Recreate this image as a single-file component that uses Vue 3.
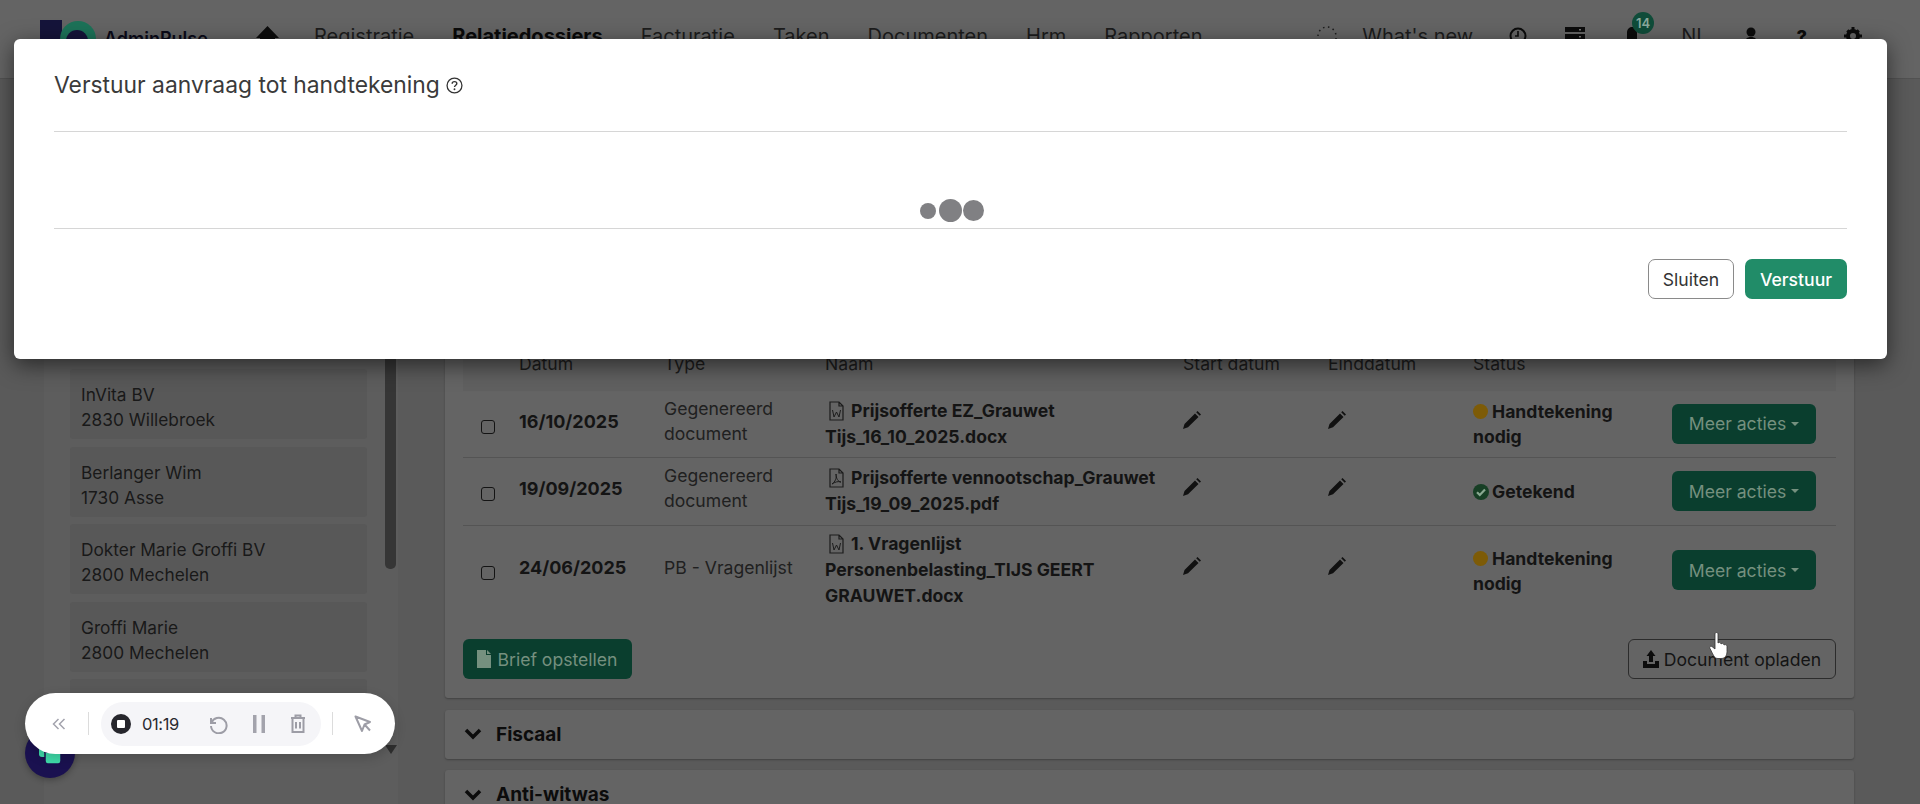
<script setup>
const nav = [
  { label: 'Registratie' },
  { label: 'Relatiedossiers', active: true },
  { label: 'Facturatie' },
  { label: 'Taken' },
  { label: 'Documenten' },
  { label: 'Hrm' },
  { label: 'Rapporten' },
]
const clients = [
  ['InVita BV', '2830 Willebroek'],
  ['Berlanger Wim', '1730 Asse'],
  ['Dokter Marie Groffi BV', '2800 Mechelen'],
  ['Groffi Marie', '2800 Mechelen'],
  ['', ''],
]
const docs = [
  { date: '16/10/2025', type: 'Gegenereerd document', kind: 'W', name: ['Prijsofferte EZ_Grauwet', 'Tijs_16_10_2025.docx'], status: 'pending', cls: 'r1' },
  { date: '19/09/2025', type: 'Gegenereerd document', kind: 'P', name: ['Prijsofferte vennootschap_Grauwet', 'Tijs_19_09_2025.pdf'], status: 'signed', cls: 'r2' },
  { date: '24/06/2025', type: 'PB - Vragenlijst', kind: 'W', name: ['1. Vragenlijst', 'Personenbelasting_TIJS GEERT', 'GRAUWET.docx'], status: 'pending', cls: 'r3' },
]
</script>

<template>
  <div class="page">
    <header class="topbar">
      <div class="logo">
        <svg class="logo-mark" width="56" height="50" viewBox="0 0 56 50">
          <rect x="0" y="0" width="22" height="50" fill="#15143a" />
          <circle cx="38" cy="19" r="18" fill="#1c7258" />
          <circle cx="37" cy="21" r="11" fill="#15143a" />
        </svg>
        <span class="logo-text">AdminPulse</span>
      </div>
      <svg class="home" width="23" height="20" viewBox="0 0 23 20"><path d="M11.5 0 23 12H19V20H4V12H0Z" fill="#0c0c0c" /></svg>
      <nav class="nav">
        <span v-for="n in nav" :key="n.label" :class="{ active: n.active }">{{ n.label }}</span>
      </nav>
      <div class="tools">
        <svg class="t-spin" width="20" height="24" viewBox="0 0 20 24"><path d="M1 12A9 9 0 0 1 19 12V20" fill="none" stroke="#1c1c1c" stroke-width="1.500" stroke-dasharray="1.500 3.500" /></svg>
        <span class="t-new">What's new</span>
        <svg class="t-clock" width="18" height="18" viewBox="0 0 18 18"><circle cx="9" cy="9" r="7.5" fill="none" stroke="#0c0c0c" stroke-width="2" /><path d="M9 4v5H6" fill="none" stroke="#0c0c0c" stroke-width="1.6" /></svg>
        <svg class="t-server" width="20" height="18" viewBox="0 0 20 18"><path d="M0 0h20v5H0zM0 7h20v5H0zM0 14h20v4H0z" fill="#0c0c0c" /><path d="M14 2h2v1.5h-2zM14 9h2v1.5h-2z" fill="#777" /></svg>
        <div class="t-bell">
          <svg width="12" height="18" viewBox="0 0 12 18"><path d="M6 0c3 0 5 2.500 5 6v6l1 2H0l1-2V6c0-3.500 2-6 5-6z" fill="#0c0c0c" /></svg>
          <span class="badge">14</span>
        </div>
        <span class="t-nl">NL</span>
        <svg class="t-user" width="12" height="18" viewBox="0 0 12 18"><circle cx="6" cy="5" r="4.500" fill="#0c0c0c" /><path d="M0 16c0-4 2-6 6-6s6 2 6 6z" fill="#0c0c0c" /></svg>
        <span class="t-help">?</span>
        <svg class="t-gear" width="18" height="18" viewBox="0 0 18 18"><circle cx="9" cy="9" r="5" fill="none" stroke="#0c0c0c" stroke-width="4" /><path d="M7.500 0h3v3h-3zM7.500 15h3v3h-3zM0 7.500h3v3H0zM15 7.500h3v3h-3zM2.300 4.400l2.100-2.100 2 2-2.100 2.100zM11.600 13.700l2.100-2.100 2 2-2.100 2.100zM13.700 2.300l2.100 2.100-2 2-2.100-2.100zM4.400 11.600l2.100 2.100-2 2-2.100-2.100z" fill="#0c0c0c" /></svg>
      </div>
    </header>

    <main class="main">
      <aside class="panel">
        <div class="list">
          <div v-for="(c, i) in clients" :key="i" class="client">
            <div>{{ c[0] }}</div>
            <div>{{ c[1] }}</div>
          </div>
        </div>
        <div class="scroll">
          <div class="thumb"></div>
          <div class="arrow"></div>
        </div>
      </aside>

      <section class="content">
        <div class="card docs">
          <table class="table">
            <colgroup>
              <col class="c0" /><col class="c1" /><col class="c2" /><col class="c3" />
              <col class="c4" /><col class="c5" /><col class="c6" /><col class="c7" />
            </colgroup>
            <thead>
              <tr>
                <th></th><th>Datum</th><th>Type</th><th>Naam</th>
                <th>Start datum</th><th>Einddatum</th><th>Status</th><th></th>
              </tr>
            </thead>
            <tbody>
              <tr v-for="d in docs" :key="d.date" :class="d.cls">
                <td><span class="check"></span></td>
                <td class="date">{{ d.date }}</td>
                <td class="type">{{ d.type }}</td>
                <td class="name">
                  <svg class="file" width="15" height="20" viewBox="0 0 15 20">
                    <path d="M1 1h9l4 4v14H1zM10 1v4h4" fill="none" stroke="#1c1c1c" stroke-width="1.200" />
                    <path v-if="d.kind === 'W'" d="M3.500 9l1.500 7 2.500-5 2.500 5 1.500-7" fill="none" stroke="#1c1c1c" stroke-width="1" />
                    <path v-else d="M7 6c1 4-1 8-4 10 3-2 6-3 9-2-3 0-5-4-5-8z" fill="none" stroke="#1c1c1c" stroke-width="1" />
                  </svg>
                  <template v-for="(l, i) in d.name" :key="i"><span>{{ l }}</span><br v-if="i < d.name.length - 1" /></template>
                </td>
                <td v-for="col in 2" :key="col" class="edit">
                  <svg width="19" height="18" viewBox="0 0 19 18"><path d="M0 18l1.500-5L12 2.500l3.500 3.500L5 16.300zM13.200 1.300 14.500 0 18 3.500 16.700 4.800z" fill="#111" /></svg>
                </td>
                <td class="status">
                  <template v-if="d.status === 'pending'"><span class="dot"></span>Handtekening<br />nodig</template>
                  <template v-else>
                    <svg class="ok" width="16" height="16" viewBox="0 0 16 16"><circle cx="8" cy="8" r="8" fill="#173f25" /><path d="M4 8.200l2.800 2.800 5.200-5.400" fill="none" stroke="#8aa992" stroke-width="2.200" /></svg>Getekend
                  </template>
                </td>
                <td class="act"><button class="btn green">Meer acties<i class="caret"></i></button></td>
              </tr>
            </tbody>
          </table>
          <div class="foot">
            <button class="btn green">
              <svg width="14" height="18" viewBox="0 0 14 18"><path d="M0 0h9v5h5v13H0z" fill="#75907f" /><path d="M10 0l4 4h-4zM3 8h8v1.300H3zM3 11h8v1.300H3zM3 14h8v1.300H3z" fill="#75907f" /></svg>
              Brief opstellen
            </button>
            <button class="btn outline">
              <svg width="16" height="18" viewBox="0 0 16 18"><path d="M8 0l4.500 6H10v6H6V6H3.500z" fill="#0c0c0c" /><path d="M0 11h4v3h8v-3h4v7H0z" fill="#0c0c0c" /></svg>
              Document opladen
            </button>
          </div>
        </div>
        <div class="card section">
          <svg width="18" height="12" viewBox="0 0 18 12"><path d="M2 2l7 7 7-7" fill="none" stroke="#0c0c0c" stroke-width="3.500" /></svg>
          <span>Fiscaal</span>
        </div>
        <div class="card section">
          <svg width="18" height="12" viewBox="0 0 18 12"><path d="M2 2l7 7 7-7" fill="none" stroke="#0c0c0c" stroke-width="3.500" /></svg>
          <span>Anti-witwas</span>
        </div>
      </section>
    </main>

    <svg class="hand" width="20" height="28" viewBox="0 0 20 28">
      <path d="M6 2c0-2 3-2 3 0v9c1-1 3-1 3 1 1-1 3-1 3 1 1-.8 3-.5 3 1.500v5c0 4-2 7-6 7H9c-3 0-4-2-6-6l-2-4c-1-2 1-3 2.500-1.500L6 17z" fill="#fff" stroke="#333" stroke-width=".8" />
    </svg>

    <div class="chat">
      <svg width="26" height="26" viewBox="0 0 26 26"><rect x="2" y="2" width="15" height="15" rx="3" fill="#3fdcaa" /><rect x="8" y="8" width="16" height="16" rx="3" fill="#3fdcaa" stroke="#1a1150" stroke-width="1.500" /><rect x="7" y="7" width="5" height="6" rx="1" fill="#1a1150" /></svg>
    </div>

    <div class="recorder">
      <svg class="r-back" width="14" height="12" viewBox="0 0 14 12"><path d="M6.500 1 1.500 6l5 5M12.500 1l-5 5 5 5" fill="none" stroke="#a3a3ad" stroke-width="1.500" /></svg>
      <i class="sep sep1"></i>
      <div class="r-inner">
        <span class="stop"><i></i></span>
        <span class="time">01:19</span>
        <svg class="r-undo" width="20" height="20" viewBox="0 0 20 20"><path d="M3 4v5h5M3.400 9A7.800 7.800 0 1 1 3 12" fill="none" stroke="#9d9da6" stroke-width="2" /></svg>
        <svg class="r-pause" width="12" height="18" viewBox="0 0 12 18"><path d="M0 0h3.500v18H0zM8.500 0H12v18H8.500z" fill="#a3a3ac" /></svg>
        <svg class="r-trash" width="16" height="19" viewBox="0 0 16 19"><path d="M1 4h14M5.500 4V1.500h5V4M2.500 4v14h11V4M6 8v6.500M10 8v6.500" fill="none" stroke="#9d9da6" stroke-width="2" /></svg>
      </div>
      <i class="sep sep2"></i>
      <svg class="r-cursor" width="18" height="18" viewBox="0 0 18 18"><path d="M1.500 1.500 16 7l-5.500 2.500L8 16z M10.500 9.500 16 15.500" fill="none" stroke="#9d9da6" stroke-width="2" stroke-linejoin="round" /></svg>
    </div>

    <div class="modal">
      <h2 class="m-title">Verstuur aanvraag tot handtekening
        <svg class="help" width="17" height="17" viewBox="0 0 16 16"><circle cx="8" cy="8" r="7" fill="none" stroke="#333" stroke-width="1.200" /><path d="M5.800 6.300C5.800 5 6.800 4.300 8 4.300s2.200.8 2.200 1.900c0 1.600-2.200 1.600-2.200 3.300" fill="none" stroke="#333" stroke-width="1.300" /><circle cx="8" cy="11.500" r=".9" fill="#333" /></svg>
      </h2>
      <div class="m-body">
        <div class="dots"><i class="d1"></i><i class="d2"></i><i class="d3"></i></div>
      </div>
      <div class="m-foot">
        <button class="mb ghost">Sluiten</button>
        <button class="mb primary">Verstuur</button>
      </div>
    </div>
  </div>
</template>

<style>
html, body { margin: 0; background: #5a5a5a; overflow: hidden; }
</style>

<style scoped>
.page {
  position: relative;
  width: 1920px;
  height: 804px;
  overflow: hidden;
  background: #5a5a5a;
  font-family: Inter, "Liberation Sans", sans-serif;
  color: #141414;
}
.topbar {
  display: flex;
  align-items: center;
  box-sizing: border-box;
  height: 79px;
  padding: 0 58px 6px 40px;
  background: #646464;
  border-bottom: 1px solid #525252;
}
.logo { display: flex; align-items: center; width: 165px; height: 50px; margin-top: 17px; }
.logo-mark { flex: none; }
.logo-text { margin-left: 8px; font-size: 18px; font-weight: 600; color: #0a0a18; margin-top: -12px; }
.home { margin-left: 51px; flex: none; }
.nav { display: flex; gap: 38px; margin-left: 35px; font-size: 20px; color: #1c1c1c; }
.nav .active { font-weight: 700; color: #0a0a0a; }
.tools { display: flex; align-items: center; margin-left: auto; font-size: 20px; color: #1c1c1c; }
.t-new { margin-left: 25px; }
.t-clock { margin-left: 36px; }
.t-server { margin-left: 38px; }
.t-bell { margin-left: 41px; position: relative; display: flex; }
.badge {
  position: absolute; left: 6px; top: -15px; width: 22px; height: 22px; border-radius: 50%;
  background: #0f4c39; color: #8aa89c; font-size: 13px; font-weight: 600;
  display: flex; align-items: center; justify-content: center;
}
.t-nl { margin-left: 43px; }
.t-user { margin-left: 37px; }
.t-help { margin-left: 40px; font-weight: 800; color: #0c0c0c; font-size: 18px; }
.t-gear { margin-left: 37px; }

.main { display: flex; align-items: flex-start; padding: 21px 0 0 44px; }
.panel {
  flex: none; display: flex; width: 354px; box-sizing: border-box;
  padding: 269px 0 0 26px; background: #5d5d5d; height: 720px;
}
.list { width: 297px; display: flex; flex-direction: column; gap: 7.500px; flex: none; }
.client {
  box-sizing: border-box; height: 70px; padding: 13px 11px; flex: none;
  background: #585858; border-radius: 3px; font-size: 17.300px; line-height: 25px; color: #191919;
}
.scroll { margin: -41px 0 0 18px; width: 11px; display: flex; flex-direction: column; }
.thumb { height: 241px; background: #363636; border-radius: 0 0 5px 5px; }
.arrow {
  margin-top: 176px; width: 0; height: 0;
  border-left: 6px solid transparent; border-right: 6px solid transparent; border-top: 9px solid #2e2e2e;
}

.content { flex: none; width: 1409px; margin-left: 47px; display: flex; flex-direction: column; }
.card { background: #646464; border-radius: 3px; box-shadow: 0 1px 2px rgba(0, 0, 0, .28); }
.docs { box-sizing: border-box; height: 598px; padding: 240px 18px 0; }
.table { table-layout: fixed; border-collapse: collapse; width: 1373px; font-size: 17.600px; line-height: 25px; }
.c0 { width: 56px; } .c1 { width: 145px; } .c2 { width: 161px; } .c3 { width: 358px; }
.c4 { width: 145px; } .c5 { width: 145px; } .c6 { width: 199px; } .c7 { width: 164px; }
th { height: 51px; box-sizing: border-box; padding: 0 0 5px; text-align: left; font-weight: 400; background: #606060; color: #1c1c1c; }
td { padding: 0; vertical-align: middle; border-top: 1px solid #545454; }
thead + tbody tr:first-child td { border-top: 0; }
.r1 { height: 66px; } .r2 { height: 68px; } .r3 { height: 90px; }
.check { display: block; width: 14px; height: 14px; box-sizing: border-box; margin: 6px 0 0 18px; border: 1px solid #141414; border-radius: 3px; }
.date { font-weight: 700; font-size: 18px; color: #141414; padding-bottom: 5px; }
.type { color: #202020; padding-bottom: 6px; }
.name { font-weight: 700; color: #141414; line-height: 26px; }
.file { vertical-align: -4px; margin: 0 7px 0 4px; }
.edit { padding-bottom: 8px; }
.edit svg { display: block; }
.status { font-weight: 700; color: #141414; padding-top: 1px; }
.dot { display: inline-block; width: 15px; height: 15px; margin-right: 4px; border-radius: 50%; background: #7d5b07; vertical-align: -1px; }
.ok { margin-right: 3px; vertical-align: -2px; }
.btn {
  display: inline-flex; align-items: center; justify-content: center; gap: 5px; box-sizing: border-box;
  height: 40px; border-radius: 6px; border: 0; font: inherit; font-size: 17.600px;
}
.green { background: #0a3e2e; color: #75907f; }
.act .btn { width: 144px; gap: 3px; }
.caret { width: 0; height: 0; margin-left: 2px; border-left: 4px solid transparent; border-right: 4px solid transparent; border-top: 4px solid #75907f; }
.foot { display: flex; justify-content: space-between; margin-top: 24px; }
.foot .green { width: 169px; gap: 6px; }
.outline { width: 208px; background: transparent; border: 1px solid #2c2c2c; color: #141414; }
.section { display: flex; align-items: center; gap: 14px; box-sizing: border-box; height: 49px; margin-top: 11.500px; padding-left: 19px; font-size: 19px; font-weight: 700; color: #0c0c0c; }

.hand { position: absolute; left: 1709px; top: 632px; }
.chat {
  position: absolute; left: 25px; top: 728px; width: 50px; height: 50px; border-radius: 50%;
  background: #1a1150; display: flex; align-items: center; justify-content: center; box-shadow: 0 2px 6px rgba(0,0,0,.3);
}
.recorder {
  position: absolute; left: 25px; top: 693px; width: 370px; height: 61px; border-radius: 31px;
  background: #fff; display: flex; align-items: center; box-shadow: 0 4px 12px rgba(0,0,0,.18);
}
.r-back { margin-left: 27px; }
.sep { width: 1px; height: 23px; background: #dcdcdc; }
.sep1 { margin-left: 22px; }
.r-inner {
  margin-left: 12px; width: 220px; height: 44px; border-radius: 22px; background: #f5f5f8;
  display: flex; align-items: center;
}
.stop { margin-left: 10px; width: 20px; height: 20px; border-radius: 50%; background: #26262c; display: flex; align-items: center; justify-content: center; }
.stop i { width: 8px; height: 8px; background: #fff; border-radius: 1px; }
.time { margin-left: 11px; font-size: 16.500px; letter-spacing: -.4px; color: #2a2a30; font-family: Inter, sans-serif; }
.r-undo { margin-left: 29px; }
.r-pause { margin-left: 25px; }
.r-trash { margin-left: 25px; }
.sep2 { margin-left: 11px; }
.r-cursor { margin-left: 21px; }

.modal {
  position: absolute; left: 14px; top: 39px; width: 1873px; height: 320px; box-sizing: border-box;
  padding: 0 40px; background: #fff; border-radius: 6px; box-shadow: 0 6px 22px rgba(0, 0, 0, .55);
}
.m-title {
  margin: 0; box-sizing: border-box; height: 93px; display: flex; align-items: center; gap: 6px;
  font-size: 22.850px; font-weight: 400; color: #3a3a3a; border-bottom: 1px solid #d6d6d6;
}
.help { flex: none; }
.m-body { box-sizing: border-box; height: 97px; padding-top: 67px; border-bottom: 1px solid #d6d6d6; display: flex; justify-content: center; }
.dots { display: flex; align-items: center; height: 23px; margin-left: 2px; }
.dots i { display: block; border-radius: 50%; background: #808083; }
.d1 { width: 16px; height: 16px; }
.d2 { width: 23px; height: 23px; margin-left: 3px; }
.d3 { width: 21px; height: 21px; margin-left: 1px; }
.m-foot { display: flex; justify-content: flex-end; gap: 11px; padding-top: 30px; }
.mb { box-sizing: border-box; height: 40px; border-radius: 7px; font: inherit; font-size: 17.600px; }
.ghost { width: 86px; background: #fff; border: 1px solid #8a8a8a; color: #333; }
.primary { width: 102px; background: #218c68; border: 0; color: #fff; font-weight: 500; }
</style>
